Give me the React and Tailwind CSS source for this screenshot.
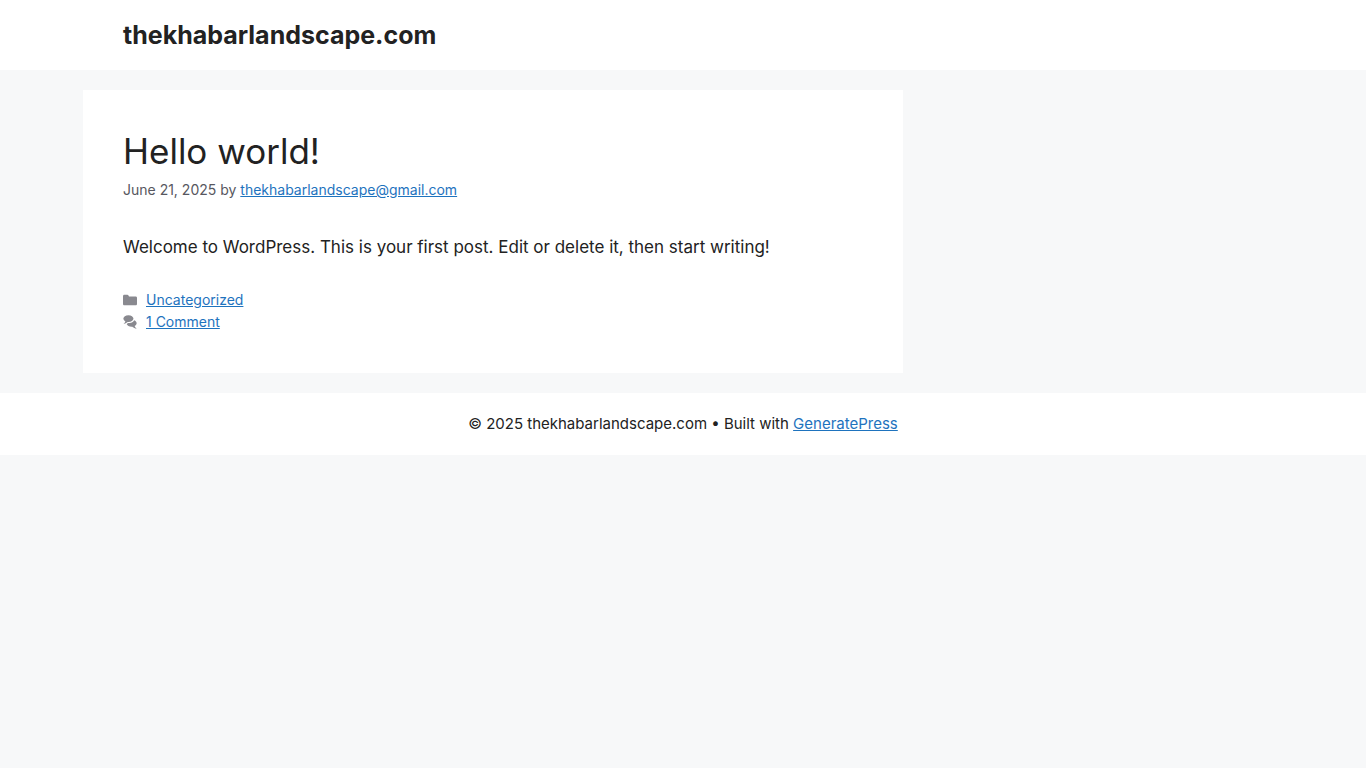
// Blog home page with a single post

const posts = [
  {
    id: 1,
    title: 'Hello world!',
    date: 'June 21, 2025',
    author: 'thekhabarlandscape@gmail.com',
    excerpt: 'Welcome to WordPress. This is your first post. Edit or delete it, then start writing!',
    category: 'Uncategorized',
    comments: '1 Comment',
  },
];

const linkClass = 'text-[#1e73be] underline hover:text-black';

function FolderIcon() {
  return (
    <svg viewBox="0 0 512 512" className="size-[14px] shrink-0" fill="currentColor" aria-hidden="true">
      <path d="M0 112c0-26.51 21.49-48 48-48h110.014a48 48 0 0 1 43.592 27.907l12.349 26.791A16 16 0 0 0 228.486 128H464c26.51 0 48 21.49 48 48v224c0 26.51-21.49 48-48 48H48c-26.51 0-48-21.49-48-48V112z" />
    </svg>
  );
}

function CommentsIcon() {
  return (
    <svg viewBox="0 0 512 512" className="size-[14px] shrink-0" fill="currentColor" aria-hidden="true">
      <path d="M132.838 329.973a435.298 435.298 0 0 0 16.769-9.004c13.363-7.574 26.587-16.142 37.419-25.507 7.544.597 15.27.925 23.098.925 54.905 0 105.634-15.311 143.285-41.28 23.728-16.365 43.115-37.692 54.155-62.645 54.739 22.205 91.498 63.272 91.498 110.286 0 42.186-29.558 79.498-75.09 102.828 23.46 49.216 75.09 101.709 75.09 101.709s-115.837-38.35-154.424-78.46c-9.956 1.12-20.297 1.758-30.793 1.758-88.727 0-162.927-43.071-181.007-100.61z" />
      <path d="M383.371 132.502c0 70.603-82.961 127.787-185.216 127.787-10.496 0-20.837-.639-30.793-1.757-38.587 40.093-154.424 78.429-154.424 78.429s51.63-52.472 75.09-101.67c-45.532-23.321-75.09-60.619-75.09-102.79C12.938 61.9 95.9 4.716 198.155 4.716 300.41 4.715 383.37 61.9 383.37 132.502z" />
    </svg>
  );
}

function Post({ post }) {
  return (
    <article className="bg-white p-10">
      <header>
        <h2 className="text-[35px] leading-[42px] font-normal mb-[7px]">
          <a href="#post">{post.title}</a>
        </h2>
        <div className="text-[14px] leading-[22px] text-[#575760]">
          <time>{post.date}</time> by{' '}
          <a href="#author" className={linkClass}>{post.author}</a>
        </div>
      </header>

      <p className="mt-[33px] text-[17px] leading-[26px]">{post.excerpt}</p>

      <footer className="mt-[29px] text-[14px] leading-[22px] text-[#89898f]">
        <div className="flex items-center gap-[9px]">
          <FolderIcon />
          <a href="#category" className={linkClass}>{post.category}</a>
        </div>
        <div className="flex items-center gap-[9px]">
          <CommentsIcon />
          <a href="#comments" className={linkClass}>{post.comments}</a>
        </div>
      </footer>
    </article>
  );
}

export default function App() {
  return (
    <div className="min-h-screen bg-[#f7f8f9] text-[#222222] font-['Inter',sans-serif] antialiased [font-optical-sizing:none]">
      <header className="bg-white">
        <div className="max-w-[1200px] mx-auto px-10 py-5">
          <p className="text-[25px] leading-[30px] font-bold">
            <a href="#home">thekhabarlandscape.com</a>
          </p>
        </div>
      </header>

      <div className="max-w-[1200px] mx-auto py-5 md:pr-[380px]">
        <main>
          {posts.map(post => <Post key={post.id} post={post} />)}
        </main>
      </div>

      <footer className="bg-white">
        <div className="max-w-[1200px] mx-auto px-10 py-5 text-center text-[15px] leading-[22px]">
          © 2025 thekhabarlandscape.com • Built with{' '}
          <a href="#generatepress" className={linkClass}>GeneratePress</a>
        </div>
      </footer>
    </div>
  );
}
